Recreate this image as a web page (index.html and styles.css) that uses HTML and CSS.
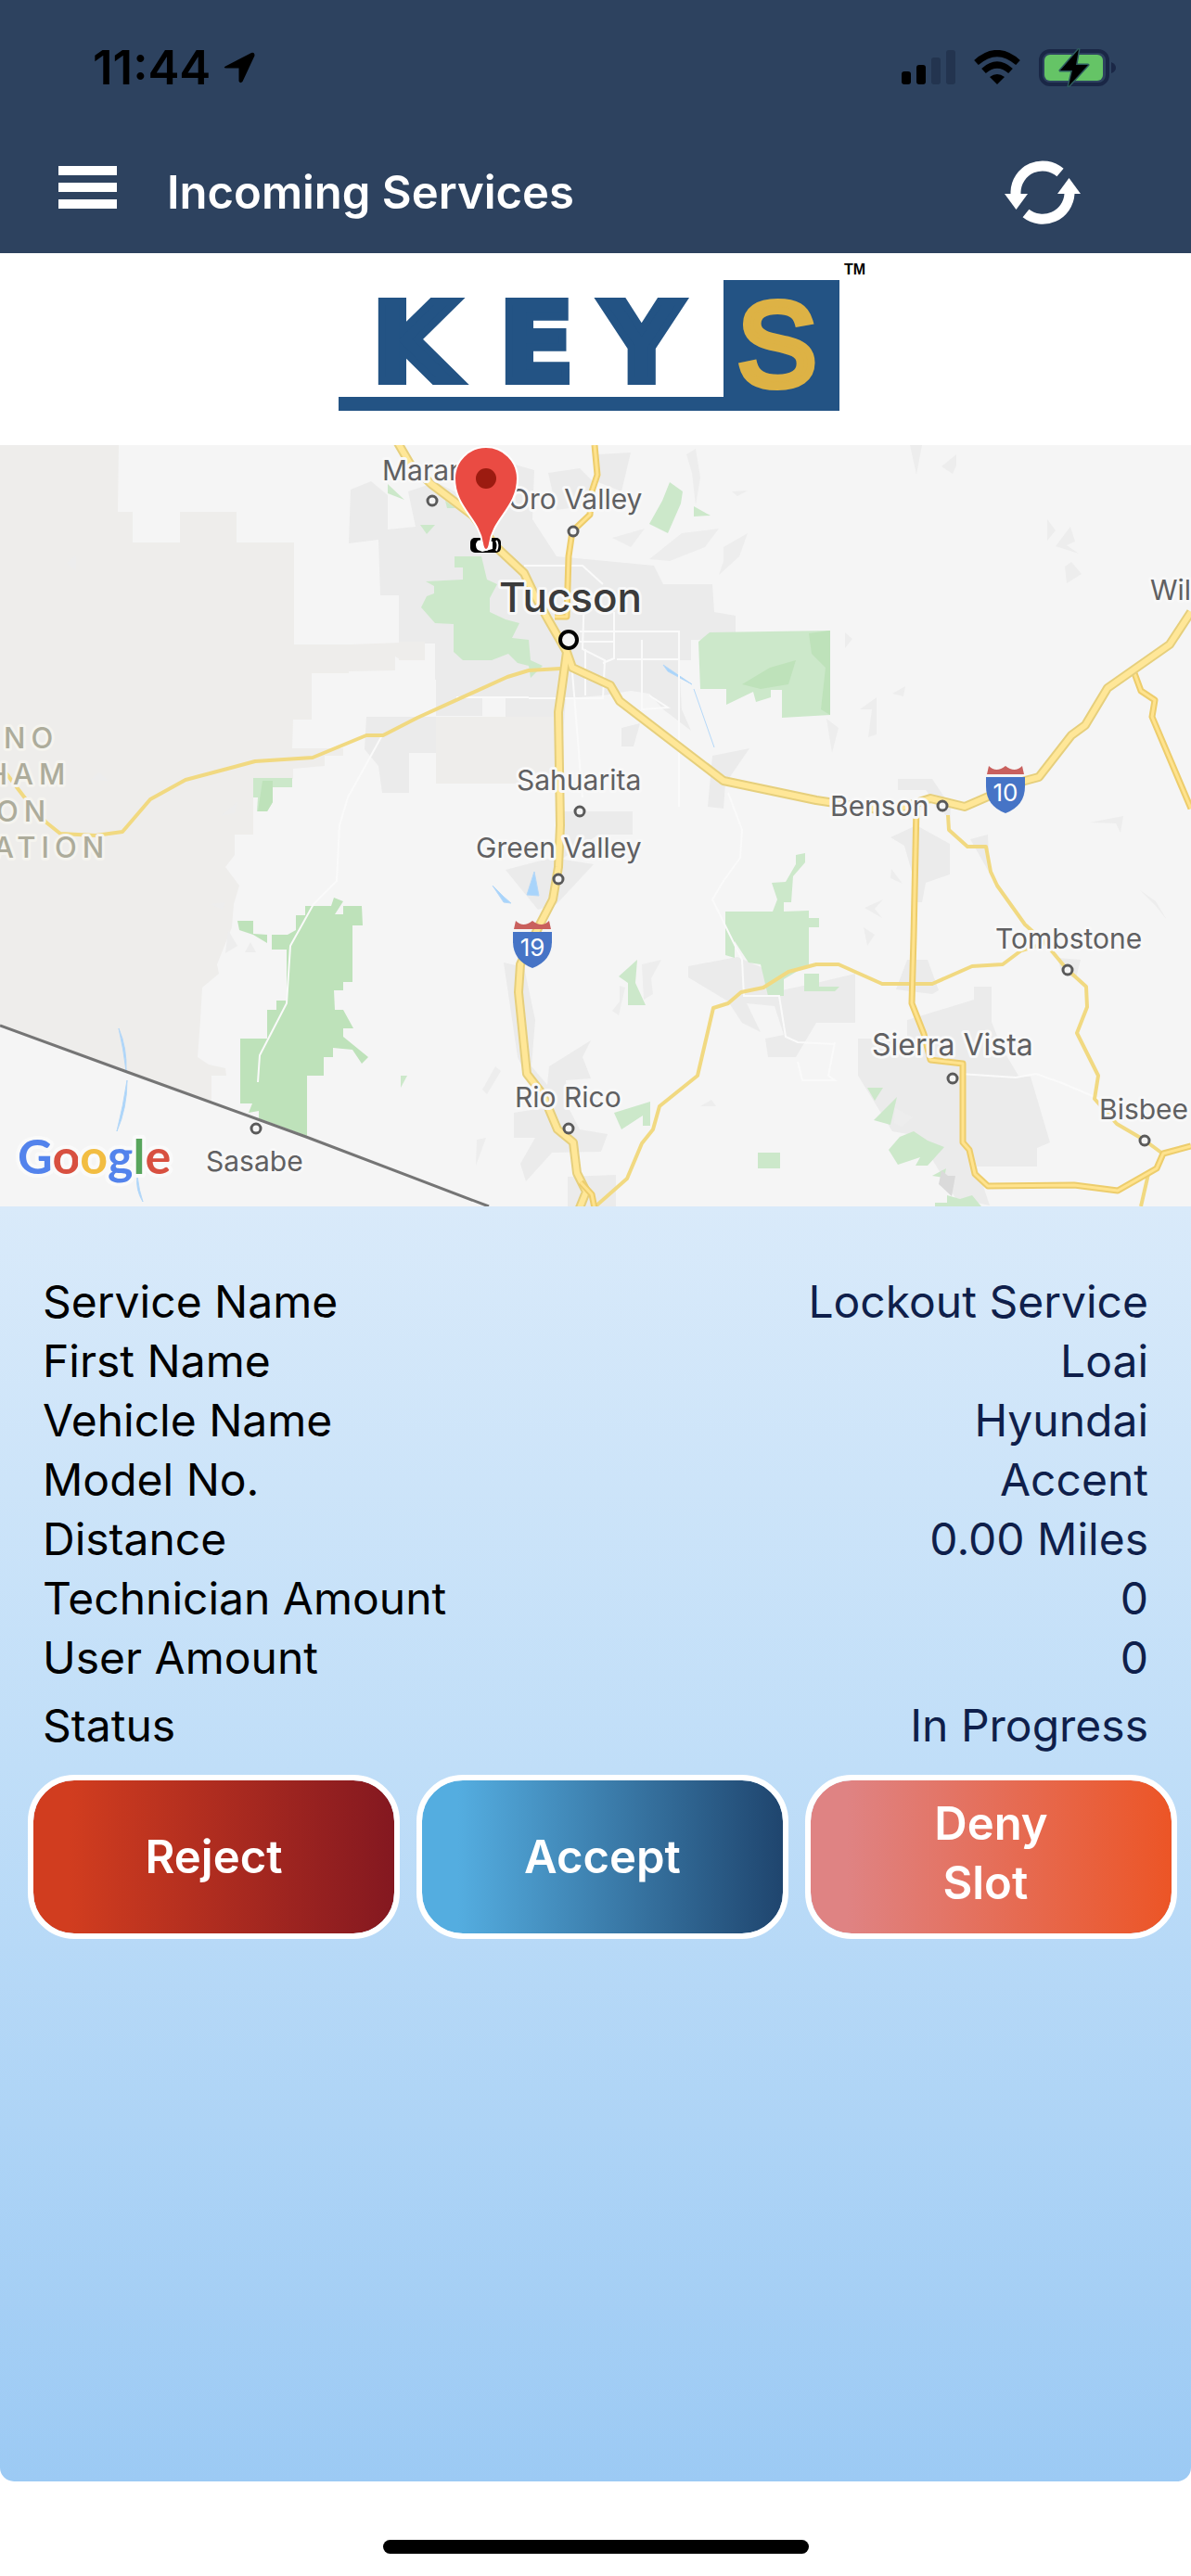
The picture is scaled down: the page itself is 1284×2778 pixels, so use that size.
FILE: index.html
```html
<!DOCTYPE html>
<html lang="en">
<head>
<meta charset="UTF-8" />
<meta name="viewport" content="width=device-width, initial-scale=1" />
<title>Incoming Services</title>
<link rel="stylesheet" href="styles.css">
</head>
<body>

<header class="top">
  <div class="status-bar">
    <div class="status-left">
      <span class="time">11:44</span>
      <svg class="location" viewBox="0 0 34 34" aria-hidden="true">
        <path d="M2 15.500 L30 1 Q33.500 0 33.500 4 L20.500 32 Q18 34.500 16.500 31.500 V17.500 H3 Q-1 17.500 2 15.500Z" />
      </svg>
    </div>
    <div class="status-right">
      <svg class="signal" viewBox="0 0 58 38" aria-hidden="true">
        <rect x="0" y="23" width="10" height="14" rx="3" />
        <rect x="16" y="16" width="10" height="21" rx="3" />
        <rect class="off" x="32" y="8" width="10" height="29" rx="3" />
        <rect class="off" x="48" y="0" width="10" height="37" rx="3" />
      </svg>
      <svg class="wifi" viewBox="0 0 50 38" aria-hidden="true">
        <path class="arc" d="M2.500 13.500 Q25 -6.500 47.500 13.500" />
        <path class="arc" d="M10.500 22.500 Q25 9.500 39.500 22.500" />
        <path d="M17 29 Q25 23 33 29 L25 37Z" />
      </svg>
      <svg class="battery" viewBox="0 0 84 42" aria-hidden="true">
        <rect class="shell" x="2" y="3" width="72" height="36" rx="10" />
        <path class="shell-nub" d="M78 15 Q83 17 83 21 Q83 25 78 27Z" />
        <rect class="charge" x="6" y="7" width="63" height="28" rx="6" />
        <path class="bolt" d="M43 1 L23 24 H36 L32 41 L53 18 H40Z" />
      </svg>
    </div>
  </div>
  <nav class="app-bar">
    <button class="icon-btn menu-btn" type="button" aria-label="Menu">
      <span></span><span></span><span></span>
    </button>
    <h1>Incoming Services</h1>
    <button class="icon-btn refresh-btn" type="button" aria-label="Refresh">
      <svg viewBox="0 0 82 70" aria-hidden="true">
        <path class="ring" d="M12 37 V34 A29 29 0 0 1 60 13" />
        <path class="ring" d="M70 33 V36 A29 29 0 0 1 23 57" />
        <path class="head" d="M0 36 H25 L12.500 53Z" />
        <path class="head" d="M57 36 H82 L69.500 19Z" />
      </svg>
    </button>
  </nav>
</header>

<div class="brand">
  <svg class="brand-logo" viewBox="0 0 570 166" role="img" aria-label="KEYS">
    <path class="brand-box" d="M0 146 H415 V20 H540 V161 H0Z" />
    <text class="brand-key" x="36" y="129">K</text>
    <text class="brand-key" x="173" y="129">E</text>
    <text class="brand-key" x="284" y="129">Y</text>
    <text class="brand-s" x="430" y="134">S</text>
    <text class="brand-tm" x="545" y="14">TM</text>
  </svg>
</div>

<svg class="map" viewBox="0 480 1284 821" role="img" aria-label="Map of Tucson and southern Arizona">
  <rect class="land" x="0" y="480" width="1284" height="821" />

  <!-- reservations -->
  <g class="reserve">
    <path d="M0 480H128L127 552H143V585H194V552H255V585H317V695L378 695L458 692V712H433L426 708V723L376 724V726H336V776H316L315 807H370V815H350V826L316 829V840H273V900H253V922L243 935L258 955L252 975L250 1000L234 1040L236 1050L218 1065L216 1100L213 1140L225 1148L243 1152L244 1160H228V1188L0 1106Z" />
  </g>

  <!-- towns -->
  <g class="urban">
    <path d="M378 528L400 519L418 534V571L448 568L440 530L470 520L520 545L552 500L576 507L574 560L600 600L705 610L715 630H768L770 660L793 664V690H745V712H732L735 765L745 788L715 765L700 748L680 745L650 750L610 753L603 845H545V752H520V772H470V812H441V855H412L408 826L393 808L395 773H470V733H469V694H430V642H410L408 582L376 586Z" />
    <path d="M591 510L625 505L640 520L635 545L600 550Z" />
    <path d="M645 490L680 488L670 530L645 520Z" />
    <path d="M768 815L808 807L782 845L780 872L763 870Z" />
    <path d="M670 785L690 780L683 805H670Z" />
    <path d="M602 875H682V900H645L600 930Z" />
    <path d="M545 938L595 925L640 932L600 975L580 981Z" />
    <path d="M543 1038L565 1043L577 1100L573 1150L590 1170L592 1150L637 1122L628 1140L637 1163L610 1165L613 1195L625 1218L655 1223L648 1242L595 1243L567 1274L561 1255L577 1227H554V1200L585 1195L558 1140Z" />
    <path d="M612 1269L664 1267V1301H612Z" />
    <path d="M742 1042L795 1032L825 1045L833 1070L880 1060L922 1050V1103H880L858 1140L828 1140L825 1120L845 1116L835 1085L805 1082L820 1113L800 1103L785 1080L742 1054Z" />
    <path d="M978 1100L1050 1078V1064H1069V1102L1080 1130L1098 1160L1111 1161L1132 1232L1118 1238V1258H1053L1067 1300L1030 1292L990 1225L962 1220L925 1160V1120H978Z" />
    <path d="M968 840H1005L1025 870L1024 885L998 852H968Z" />
    <path d="M960 903L988 890L1024 910V943L998 952L994 973H988L983 940L975 912Z" />
    <path d="M1046 905L1065 900L1067 942Z" />
    <path d="M966 1067L978 1035H1000L1012 1068L1005 1072Z" />
    <path d="M1140 1033L1165 1035L1160 1055L1145 1050Z" />
  </g>
  <path class="reserve" d="M470 773H600L603 845H470Z" />
  <path class="reserve" d="M430 692H458V712H430Z" />

  <!-- hills -->
  <g class="hill">
    <path d="M82 599L72 607L82 616Z" />
    <path d="M98 841L107 833L117 842Z" />
    <path d="M238 880L256 865L253 877Z" />
    <path d="M740 490L750 484L755 515L750 545L746 510Z" />
    <path d="M789 530L806 529L795 535Z" />
    <path d="M735 575L775 570L760 590L722 605L700 603Z" />
    <path d="M780 590L806 575L797 600L775 620L780 605Z" />
    <path d="M660 580L695 570L680 590Z" />
    <path d="M981 480H994L988 512Z" />
    <path d="M1015 503L1031 490V502L1027 511Z" />
    <path d="M1129 560L1138 572L1129 583Z" />
    <path d="M1138 589L1154 568L1159 584L1150 588L1163 597Z" />
    <path d="M1148 611L1155 606L1166 619L1150 629Z" />
    <path d="M911 682L919 689L911 699Z" />
    <path d="M962 748L976 740L974 751Z" />
    <path d="M927 765L945 752V792L936 795L940 765Z" />
    <path d="M891 775L904 785L897 812Z" />
    <path d="M1175 887L1211 880L1208 898L1203 888Z" />
    <path d="M932 979L952 970L943 980L951 990Z" />
    <path d="M931 1000L943 1008L935 1020Z" />
    <path d="M961 937L973 953L960 947Z" />
    <path d="M1229 960L1246 972L1258 992L1246 977Z" />
    <path d="M692 1040L713 1035L702 1055L704 1072L694 1078Z" />
    <path d="M668 1063L674 1065L667 1095L660 1090L668 1080Z" />
    <path d="M534 1150L540 1155L525 1180L520 1175Z" />
    <path d="M514 1229L524 1227L513 1257Z" />
    <path d="M755 1193L767 1186L772 1193Z" />
    <path d="M227 975L243 973L240 981Z" />
    <path d="M246 1003L256 1020L243 1028Z" />
    <path d="M264 1027L270 1016L276 1027Z" />
    <path d="M965 1195L984 1205L972 1215L964 1211Z" />
  </g>

  <!-- parks -->
  <g class="park">
    <path d="M490 600H519L525 625L536 630L528 645V660L545 668L560 672L552 688L570 690L572 712L585 718L572 731L570 718L558 715L548 705L530 712H499L489 703V673L469 672L454 655L460 643L468 640V632L459 627L499 625V612H490Z" />
    <path d="M753 692L765 682L895 680V771L843 774V744H831V752L815 757L812 746L783 760V743H755Z" />
    <path d="M722 520L736 530L734 543L720 575L700 565L714 540Z" />
    <path d="M748 546L766 556L748 557Z" />
    <path d="M418 522L436 539L418 532Z" />
    <path d="M453 566H469L460 576Z" />
    <path d="M480 540L491 548L482 548Z" />
    <path d="M273 839H315V849H294V865L288 875H277L278 860H273Z" />
    <path d="M782 983H833L838 970L832 952L847 951L858 932V922L868 920V930L855 945L853 973H845V983L872 982V990H883V1000H872V1040L845 1056V1074H828L820 1040L807 1038L792 1015V1033L782 1030Z" />
    <path d="M867 1050H883V1064H905L900 1069H867Z" />
    <path d="M667 1053L687 1035L685 1060L696 1084H677V1060Z" />
    <path d="M662 1200L701 1188V1214H693V1203L670 1218Z" />
    <path d="M817 1243H841V1260H817Z" />
    <path d="M432 1160H439L432 1173Z" />
    <path d="M958 1240L970 1226L985 1220L1000 1230L1018 1237L1000 1257H987L992 1248L968 1256Z" />
    <path d="M942 1208L967 1183L960 1213Z" />
    <path d="M935 1173H952L943 1187Z" />
    <path d="M1005 1268L1020 1260L1018 1270Z" />
    <path d="M1008 1301V1297H1021V1289L1035 1293L1048 1289L1058 1301Z" />
  </g>
  <g class="park-dark">
    <path d="M329 977H357L360 968L370 972L361 986H370V977H390L391 998H380V1059H370V1068H360L361 1089H370L381 1109H370V1118L397 1140L390 1147L380 1132L359 1130V1140H349V1160H331V1225L279 1206V1198L268 1200L272 1190H259V1120H288V1089H298V1079H309V1024H293V1008H310L319 1003V987H329Z" />
    <path d="M256 993H273V1007L288 1008V1017L273 1008L258 1003Z" />
    <path d="M872 683L895 680V771L885 765L890 720L875 705Z" />
    <path d="M830 720L858 712L850 738L820 743L800 738Z" />
    <path d="M283 842H294V865L288 875H278Z" />
  </g>
  <path class="shade" d="M1015 1262L1022 1268L1030 1268L1026 1290L1012 1277Z" />

  <!-- water -->
  <g class="water">
    <path d="M128 1109Q137 1130 136 1155Q133 1130 128 1109Z" />
    <path d="M137 1165Q137 1195 126 1220Q133 1192 137 1165Z" />
    <path d="M148 1268Q150 1285 154 1296Q146 1283 148 1268Z" />
    <path d="M576 940L581 966L568 965Z" />
    <path d="M531 955L543 967L551 974L543 973Z" />
    <path d="M715 717L746 738L720 724Z" />
    <path d="M748 743L770 806" />
  </g>

  <!-- minor streets -->
  <g class="street">
    <path d="M366 890L363 950L338 975L313 1020L309 1082L280 1138L278 1167" />
    <path d="M412 793L375 860L366 890" />
    <path d="M565 610H628L650 630M570 753H650L652 712L628 700L630 640M662 660V710L650 715M692 690V765L720 763L700 750M732 680V870M625 681H733M625 692H662M665 711H733M617 725L628 860M631 700V750M492 752H570" />
    <path d="M785 855L800 895L798 925L780 950L768 970L800 1035L802 1074H840L847 1118L860 1124L900 1126" />
    <path d="M1035 1158L1095 1162L1117 1158L1145 1168L1185 1185" />
    <path d="M900 1124L893 1160L900 1165H865L860 1145" />
  </g>

  <path class="border" d="M0 1106L137 1156L330 1226L527 1301" />

  <!-- roads -->
  <g class="road-minor">
    <path d="M0 825L15 845L28 862L50 887L65 899L103 901L132 897L162 862L200 841L275 821L337 817L395 793H413L450 774L547 730L570 723L604 721" />
    <path d="M642 1301L676 1271L692 1233L704 1218L711 1193L752 1160L769 1087L785 1082L799 1070L823 1065L850 1048L880 1040H904L951 1061H1005L1048 1042L1081 1040L1101 1025L1125 1018" />
    <path d="M1022 879L1023 895L1043 913H1063L1068 940L1075 955L1105 997L1125 1015L1150 1045L1171 1064L1172 1086L1161 1114L1184 1160L1180 1185L1204 1212L1233 1229L1252 1243" />
    <path d="M1238 1266L1230 1301" />
  </g>
  <g class="road-case">
    <path d="M641 480L644 512L638 530L636 555L617 573L613 600L611 665H598" />
    <path d="M988 870L985 1010L983 1082L996 1115L1003 1143L1038 1147V1232L1045 1240L1051 1266L1065 1279L1158 1278L1205 1284L1247 1260L1254 1244L1284 1236" />
    <path d="M1223 726L1230 745L1245 755L1242 773L1284 872" />
  </g>
  <g class="road-fill">
    <path d="M641 480L644 512L638 530L636 555L617 573L613 600L611 665H598" />
    <path d="M988 870L985 1010L983 1082L996 1115L1003 1143L1038 1147V1232L1045 1240L1051 1266L1065 1279L1158 1278L1205 1284L1247 1260L1254 1244L1284 1236" />
    <path d="M1223 726L1230 745L1245 755L1242 773L1284 872" />
  </g>
  <g class="freeway-case">
    <path d="M428 476L442 500L465 522L510 556L535 590L565 618L578 645L592 670L611 703L617 720L658 739L668 756L780 842L880 863L960 875L1003 861L1040 870L1063 860L1105 842L1120 838L1155 793L1170 782L1194 742L1261 695L1284 660" />
    <path d="M611 703L606 740L602 768L604 890L602 935L596 970L583 995L561 1040L559 1070L568 1158L585 1180L601 1218L618 1232L622 1265L632 1285L624 1305" />
  </g>
  <g class="freeway">
    <path d="M428 476L442 500L465 522L510 556L535 590L565 618L578 645L592 670L611 703L617 720L658 739L668 756L780 842L880 863L960 875L1003 861L1040 870L1063 860L1105 842L1120 838L1155 793L1170 782L1194 742L1261 695L1284 660" />
    <path d="M611 703L606 740L602 768L604 890L602 935L596 970L583 995L561 1040L559 1070L568 1158L585 1180L601 1218L618 1232L622 1265L632 1285L624 1305" />
  </g>
  <path class="road-case" d="M626 1275L638 1288L641 1303" />
  <path class="road-fill" d="M626 1275L638 1288L641 1303" />

  <!-- interstate shields -->
  <g class="shield">
    <path class="shield-top" d="M1066 826Q1074 834 1084 826Q1094 834 1102 826L1104 835H1064Z" />
    <path class="shield-body" d="M1063 838H1105V848Q1105 869 1084 877Q1063 869 1063 848Z" />
    <text x="1084" y="864">10</text>
    <path class="shield-top" d="M556 993Q564 1001 574 993Q584 1001 592 993L594 1002H554Z" />
    <path class="shield-body" d="M553 1005H595V1015Q595 1036 574 1044Q553 1036 553 1015Z" />
    <text x="574" y="1031">19</text>
  </g>

  <!-- places -->
  <g class="place-dot">
    <circle cx="466" cy="540" r="5" />
    <circle cx="618" cy="573" r="5" />
    <circle cx="625" cy="875" r="5" />
    <circle cx="602" cy="948" r="5" />
    <circle cx="1016" cy="869" r="5" />
    <circle cx="1151" cy="1046" r="5" />
    <circle cx="1027" cy="1163" r="5" />
    <circle cx="1234" cy="1230" r="5" />
    <circle cx="613" cy="1217" r="5" />
    <circle cx="276" cy="1217" r="5" />
    <circle class="city-dot" cx="613" cy="690" r="9" />
  </g>
  <g class="region">
    <text x="4" y="807">NO</text>
    <text x="-15" y="846">HAM</text>
    <text x="-4" y="886">ON</text>
    <text x="-7" y="925">ATION</text>
  </g>
  <g class="place">
    <text x="412" y="518">Marana</text>
    <text x="548" y="549">Oro Valley</text>
    <text x="557" y="852">Sahuarita</text>
    <text x="513" y="925">Green Valley</text>
    <text x="895" y="880">Benson</text>
    <text x="1073" y="1023">Tombstone</text>
    <text class="town" x="940" y="1138">Sierra Vista</text>
    <text x="1185" y="1207">Bisbee</text>
    <text x="555" y="1194">Rio Rico</text>
    <text x="222" y="1263">Sasabe</text>
    <text x="1240" y="647">Wil</text>
    <text class="city" x="538" y="660">Tucson</text>
  </g>

  <!-- car and pin -->
  <g class="car">
    <rect x="507" y="580" width="33" height="16" rx="5" />
    <path class="glass" d="M515 583Q511 588 515 593L520 595L531 592V584L520 582Z" />
    <path class="glass-line" d="M535 583Q538 588 535 594" />
  </g>
  <path class="pin" d="M524 593Q521 593 520 586C517 560 490 547 490 516A34 34 0 0 1 558 516C558 547 531 560 528 586Q527 593 524 593Z" />
  <circle class="pin-hole" cx="524" cy="516" r="11" />

  <text class="google" x="19" y="1266"><tspan class="g-blue">G</tspan><tspan class="g-red">o</tspan><tspan class="g-yellow">o</tspan><tspan class="g-blue">g</tspan><tspan class="g-green">l</tspan><tspan class="g-red">e</tspan></text>
</svg>

<main class="details">
  <dl class="info">
    <div class="row"><dt>Service Name</dt><dd>Lockout Service</dd></div>
    <div class="row"><dt>First Name</dt><dd>Loai</dd></div>
    <div class="row"><dt>Vehicle Name</dt><dd>Hyundai</dd></div>
    <div class="row"><dt>Model No.</dt><dd>Accent</dd></div>
    <div class="row"><dt>Distance</dt><dd>0.00 Miles</dd></div>
    <div class="row"><dt>Technician Amount</dt><dd>0</dd></div>
    <div class="row"><dt>User Amount</dt><dd>0</dd></div>
    <div class="row row-status"><dt>Status</dt><dd>In Progress</dd></div>
  </dl>
  <div class="actions">
    <button class="btn btn-reject" type="button">Reject</button>
    <button class="btn btn-accept" type="button">Accept</button>
    <button class="btn btn-deny" type="button">Deny<br>Slot&nbsp;</button>
  </div>
</main>

<footer class="home-area">
  <div class="home-indicator"></div>
</footer>

</body>
</html>
```

FILE: styles.css
```css
* {
  box-sizing: border-box;
}

body {
  margin: 0;
  min-height: 100vh;
  display: flex;
  flex-direction: column;
  background: #fff;
  font-family: Inter, "Liberation Sans", sans-serif;
  font-size: 48px;
  line-height: 64px;
  color: #000;
}

/* header */
.top {
  background: #2d425f;
}

.status-bar {
  display: flex;
  justify-content: space-between;
  align-items: center;
  height: 146px;
  padding: 0 80px 0 100px;
}

.status-left {
  display: flex;
  align-items: center;
  gap: 14px;
}

.time {
  font-size: 51px;
  font-weight: 600;
}

.location {
  width: 34px;
  height: 34px;
}

.status-right {
  display: flex;
  align-items: center;
  gap: 20px;
}

.signal {
  width: 58px;
  height: 38px;
}

.signal .off {
  fill: #23344f;
}

.wifi {
  width: 50px;
  height: 38px;
}

.wifi .arc {
  fill: none;
  stroke: #000;
  stroke-width: 7;
}

.battery {
  width: 84px;
  height: 42px;
}

.shell {
  fill: none;
  stroke: #1a2746;
  stroke-width: 4;
}

.shell-nub {
  fill: #1a2746;
}

.charge {
  fill: #65c466;
}

.bolt {
  stroke: #2d5a5f;
  stroke-width: 3;
  paint-order: stroke;
  stroke-linejoin: round;
}

.app-bar {
  display: flex;
  align-items: center;
  height: 127px;
  padding: 0 119px 4px 63px;
}

.app-bar h1 {
  flex: 1;
  margin: 0;
  padding-left: 54px;
  font-size: 49px;
  font-weight: 600;
  color: #fff;
}

.icon-btn {
  padding: 0;
  border: none;
  background: none;
  cursor: pointer;
}

.menu-btn {
  display: flex;
  flex-direction: column;
  gap: 8px;
  width: 63px;
  padding-bottom: 12px;
}

.menu-btn span {
  height: 10px;
  background: #fff;
}

.refresh-btn {
  width: 82px;
  height: 70px;
}

.refresh-btn svg {
  display: block;
}

.ring {
  fill: none;
  stroke: #fff;
  stroke-width: 11;
}

.head {
  fill: #fff;
}

/* logo */
.brand {
  display: flex;
  justify-content: center;
  height: 207px;
  padding: 9px 0 0 16px;
}

.brand-logo {
  width: 570px;
  height: 166px;
}

.brand-box {
  fill: #235384;
}

.brand-key {
  font-family: "DejaVu Sans", sans-serif;
  font-size: 118px;
  font-weight: bold;
  fill: #235384;
  stroke: #235384;
  stroke-width: 8;
}

.brand-s {
  font-family: "Liberation Sans", sans-serif;
  font-size: 128px;
  fill: #ddb245;
  stroke: #ddb245;
  stroke-width: 8;
}

.brand-tm {
  font-family: "Liberation Sans", sans-serif;
  font-size: 16px;
  font-weight: bold;
}

/* map */
.map {
  display: block;
  width: 100%;
  height: auto;
}

.land { fill: #f5f5f5; }
.reserve { fill: #eeedeb; }
.urban { fill: #ebebeb; }
.hill { fill: #ededed; }
.shade { fill: #dadada; }
.park { fill: #cce8ca; }
.park-dark { fill: #bee2ba; }

.water {
  fill: #a8d4fb;
  stroke: #b5d8f8;
  stroke-width: 1;
}

.street {
  fill: none;
  stroke: #fafafa;
  stroke-width: 2;
}

.border {
  fill: none;
  stroke: #757575;
  stroke-width: 3;
}

.road-minor,
.road-case,
.road-fill,
.freeway-case,
.freeway {
  fill: none;
  stroke-linejoin: round;
}

.road-minor {
  stroke: #f1d981;
  stroke-width: 4;
}

.road-case {
  stroke: #edcd6c;
  stroke-width: 7;
}

.road-fill {
  stroke: #ffe38e;
  stroke-width: 3;
}

.freeway-case {
  stroke: #e6cf7c;
  stroke-width: 10;
}

.freeway {
  stroke: #ffe798;
  stroke-width: 6;
}

.shield-top { fill: #c9605d; }
.shield-body { fill: #4674c6; }

.shield text {
  font-size: 26px;
  fill: #fff;
  text-anchor: middle;
}

.place-dot {
  fill: #f5f5f5;
  stroke: #5a5a5a;
  stroke-width: 3;
}

.city-dot {
  stroke: #000;
  stroke-width: 4;
}

.place text {
  font-size: 30px;
  fill: #606062;
  stroke: #f8f8f8;
  stroke-width: 6;
  stroke-linejoin: round;
  paint-order: stroke;
}

.place .town {
  font-size: 32px;
}

.place .city {
  font-size: 44px;
  font-weight: 500;
  fill: #3b3b3b;
}

.region text {
  font-size: 31px;
  font-weight: 500;
  letter-spacing: 6px;
  fill: #adac9b;
  stroke: #f5f4ef;
  stroke-width: 6;
  stroke-linejoin: round;
  paint-order: stroke;
}

.glass { fill: #fff; }

.glass-line {
  fill: none;
  stroke: #fff;
  stroke-width: 2;
}

.pin {
  fill: #ea4b43;
  stroke: #fff;
  stroke-width: 2;
}

.pin-hole { fill: #9c1b10; }

.google {
  font-family: Lato, sans-serif;
  font-size: 52px;
  font-weight: bold;
  stroke: #fafafa;
  stroke-width: 8;
  stroke-linejoin: round;
  paint-order: stroke;
}

.g-blue { fill: #5383ec; }
.g-red { fill: #d85040; }
.g-yellow { fill: #f2bd42; }
.g-green { fill: #58a55c; }

/* details */
.details {
  flex: 1;
  padding-top: 71px;
  border-radius: 0 0 15px 15px;
  background: linear-gradient(#d9eafa, #c0def8 44%, #9ccaf4);
}

.info {
  margin: 0;
  padding: 0 46px;
}

.row {
  display: flex;
  justify-content: space-between;
}

.row dd {
  margin: 0;
  color: #0f1f4b;
}

.row-status {
  padding-top: 9px;
}

.actions {
  display: flex;
  gap: 18px;
  padding: 21px 15px 0 30px;
}

.btn {
  flex: 1;
  height: 177px;
  padding: 0;
  border: 6px solid #fff;
  border-radius: 50px;
  font: inherit;
  font-size: 49px;
  font-weight: 600;
  color: #fff;
  cursor: pointer;
}

.btn-reject {
  background: linear-gradient(90deg, #d13d1f 10%, #841820) padding-box;
}

.btn-accept {
  background: linear-gradient(90deg, #54ade0 10%, #1f456e) padding-box;
}

.btn-deny {
  padding-bottom: 8px;
  background: linear-gradient(90deg, #df8383 10%, #ec5526) padding-box;
}

/* bottom bar */
.home-area {
  display: flex;
  justify-content: center;
  padding: 63px 0 24px;
}

.home-indicator {
  width: 459px;
  height: 15px;
  border-radius: 8px;
  background: #000;
}
```
